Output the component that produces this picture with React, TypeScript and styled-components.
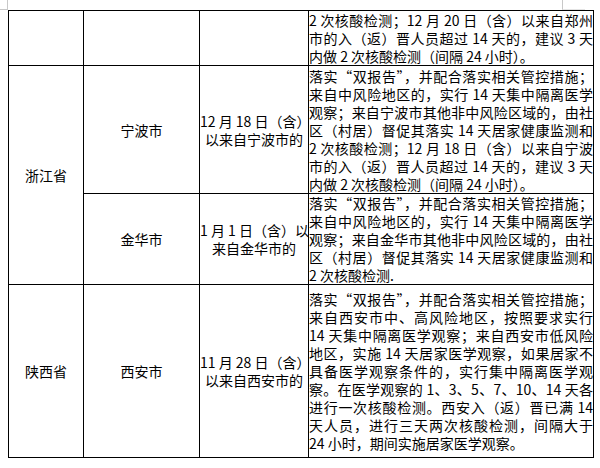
import styled, { createGlobalStyle } from "styled-components";

const GlobalStyle = createGlobalStyle`
  html, body {
    margin: 0;
    background: #fff;
  }
  body {
    font-family: "Noto Sans CJK SC", "Noto Sans", sans-serif;
    color: #000;
  }
`;

interface IRow {
  province?: string;
  provinceSpan?: number;
  city?: string;
  since?: string[];
  measures: string[];
  height: number;
}

const rows: IRow[] = [
  {
    measures: [
      "2 次核酸检测；12 月 20 日（含）以来自郑州",
      "市的入（返）晋人员超过 14 天的，建议 3 天",
      "内做 2 次核酸检测（间隔 24 小时）。",
    ],
    height: 54,
  },
  {
    province: "浙江省",
    provinceSpan: 2,
    city: "宁波市",
    since: ["12 月 18 日（含）", "以来自宁波市的"],
    measures: [
      "落实“双报告”，并配合落实相关管控措施；",
      "来自中风险地区的，实行 14 天集中隔离医学",
      "观察；来自宁波市其他非中风险区域的，由社",
      "区（村居）督促其落实 14 天居家健康监测和",
      "2 次核酸检测；12 月 18 日（含）以来自宁波",
      "市的入（返）晋人员超过 14 天的，建议 3 天",
      "内做 2 次核酸检测（间隔 24 小时）。",
    ],
    height: 127,
  },
  {
    city: "金华市",
    since: ["1 月 1 日（含）以", "来自金华市的"],
    measures: [
      "落实“双报告”，并配合落实相关管控措施；",
      "来自中风险地区的，实行 14 天集中隔离医学",
      "观察；来自金华市其他非中风险区域的，由社",
      "区（村居）督促其落实 14 天居家健康监测和",
      "2 次核酸检测.",
    ],
    height: 90,
  },
  {
    province: "陕西省",
    provinceSpan: 1,
    city: "西安市",
    since: ["11 月 28 日（含）", "以来自西安市的"],
    measures: [
      "落实“双报告”，并配合落实相关管控措施；",
      "来自西安市中、高风险地区，按照要求实行",
      "14 天集中隔离医学观察；来自西安市低风险",
      "地区，实施 14 天居家医学观察，如果居家不",
      "具备医学观察条件的，实行集中隔离医学观",
      "察。在医学观察的 1、3、5、7、10、14 天各",
      "进行一次核酸检测。西安入（返）晋已满 14",
      "天人员，进行三天两次核酸检测，间隔大于",
      "24 小时，期间实施居家医学观察。",
    ],
    height: 172,
  },
];

export default function App() {
  return (
    <Page lang="zh-CN">
      <GlobalStyle />
      <CornerMark $side="left" />
      <CornerMark $side="right" />
      <Sheet $rows={rows.map((r) => r.height)}>
        {rows.map((row, i) => {
          const line = i + 1;
          return [
            row.provinceSpan !== undefined || i === 0 ? (
              <Cell key={`p${i}`} $col={1} $row={line} $span={row.provinceSpan ?? 1}>
                {row.province && <Line $center>{row.province}</Line>}
              </Cell>
            ) : null,
            <Cell key={`c${i}`} $col={2} $row={line}>
              {row.city && <Line $center>{row.city}</Line>}
            </Cell>,
            <Cell key={`s${i}`} $col={3} $row={line}>
              {row.since?.map((t) => (
                <Line key={t} $center>
                  {t}
                </Line>
              ))}
            </Cell>,
            <Cell key={`m${i}`} $col={4} $row={line}>
              {row.measures.map((t, j) => (
                <Line key={j} $fill={j < row.measures.length - 1}>
                  {t}
                </Line>
              ))}
            </Cell>,
          ];
        })}
      </Sheet>
    </Page>
  );
}

const Page = styled.div`
  position: relative;
  width: 600px;
  min-height: 468px;
  padding: 10px 0 0 8px;
  box-sizing: border-box;
`;

const CornerMark = styled.div<{ $side: "left" | "right" }>`
  position: absolute;
  top: 0;
  width: 7px;
  height: 9px;
  border-bottom: 1px solid #c8c8c8;
  ${({ $side }) =>
    $side === "left"
      ? `left: 0; border-right: 1px solid #c8c8c8;`
      : `left: 562px; width: 22px; border-left: 1px solid #c8c8c8; border-bottom-color: #e4e4e4;`}
`;

const Sheet = styled.div<{ $rows: number[] }>`
  display: grid;
  grid-template-columns: 74px 115px 108px 284px;
  grid-template-rows: ${({ $rows }) => $rows.map((h) => `${h}px`).join(" ")};
  gap: 1px;
  padding: 1px;
  width: max-content;
  background: #000;
  position: relative;
`;

const Cell = styled.div<{ $col: number; $row: number; $span?: number }>`
  grid-column: ${({ $col }) => $col};
  grid-row: ${({ $row, $span = 1 }) => `${$row} / span ${$span}`};
  display: flex;
  flex-direction: column;
  justify-content: center;
  overflow: hidden;
  background: #fff;
  font-size: 14px;
  line-height: 18px;
`;

const Line = styled.span<{ $center?: boolean; $fill?: boolean }>`
  display: block;
  white-space: nowrap;
  text-align: ${({ $center }) => ($center ? "center" : "left")};
  text-align-last: ${({ $center, $fill }) => ($center ? "center" : $fill ? "justify" : "left")};
`;
